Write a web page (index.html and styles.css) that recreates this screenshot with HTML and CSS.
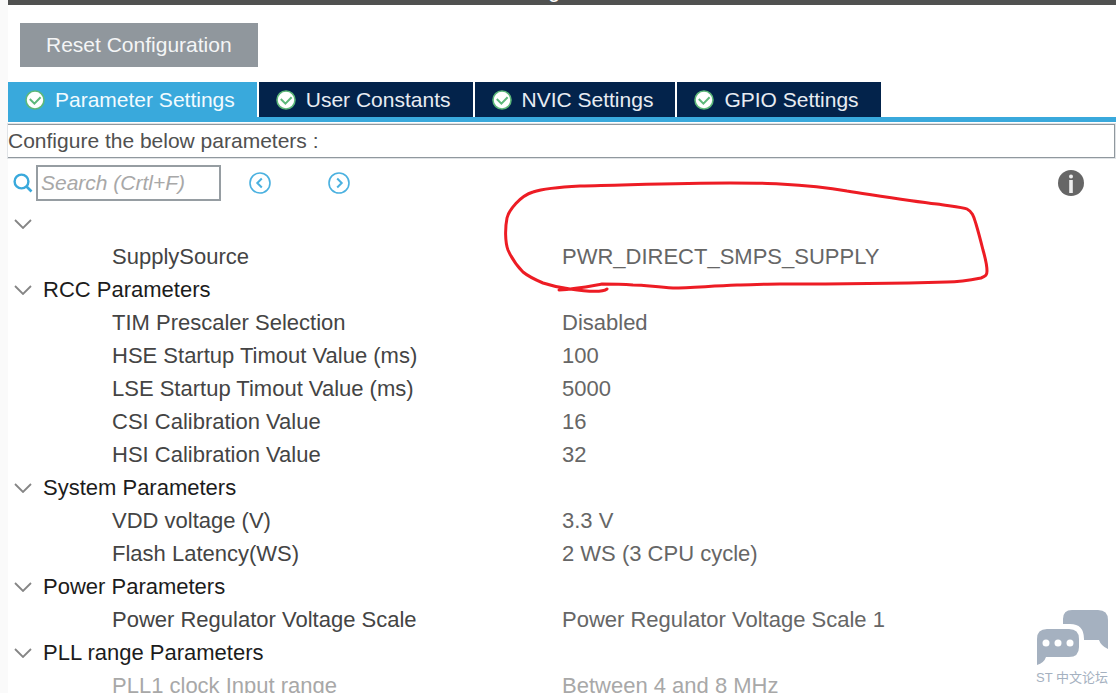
FILE: index.html
```
<!DOCTYPE html>
<html lang="en">
<head>
    <meta charset="UTF-8">
    <meta name="viewport" content="width=device-width, initial-scale=1.0">
    <title>RCC Configuration</title>
    <link rel="stylesheet" href="styles.css">
</head>
<body>
    <!-- shared icons -->
    <svg class="sprite" aria-hidden="true">
        <symbol id="check" viewBox="0 0 20 20">
            <circle cx="10" cy="10" r="9" fill="#fff" stroke="#5db87a" stroke-width="1.6"/>
            <path d="M4.8 9l4.6 4.6 6.2-6.4" fill="none" stroke="#5db87a" stroke-width="2"/>
        </symbol>
        <symbol id="chevron" viewBox="0 0 18 10">
            <path d="M1 1l8 8 8-8" fill="none" stroke="#858585" stroke-width="1.8"/>
        </symbol>
    </svg>

    <div class="panel">
        <header class="title-bar"><span>Configuration</span></header>

        <div class="actions">
            <button type="button" class="reset-button">Reset Configuration</button>
        </div>

        <nav class="tabs">
            <button type="button" class="tab active"><svg class="check"><use href="#check"/></svg>Parameter Settings</button>
            <button type="button" class="tab"><svg class="check"><use href="#check"/></svg>User Constants</button>
            <button type="button" class="tab"><svg class="check"><use href="#check"/></svg>NVIC Settings</button>
            <button type="button" class="tab"><svg class="check"><use href="#check"/></svg>GPIO Settings</button>
        </nav>

        <p class="hint">Configure the below parameters :</p>

        <div class="toolbar">
            <label for="search" aria-label="Search">
                <svg class="search-icon" viewBox="0 0 20 20">
                    <circle cx="8.5" cy="8.5" r="6.9" fill="none" stroke="#39a9dc" stroke-width="2.4"/>
                    <path d="M13.5 13.5l5 5" stroke="#39a9dc" stroke-width="2.6"/>
                </svg>
            </label>
            <input type="text" id="search" class="search" placeholder="Search (Crtl+F)">
            <button type="button" class="icon-button previous" aria-label="Previous">
                <svg viewBox="0 0 22 22" fill="none" stroke="#4bb1e0">
                    <circle cx="11" cy="11" r="10" stroke-width="1.6"/>
                    <path d="M12.8 6.5L8.3 11l4.5 4.5" stroke-width="2"/>
                </svg>
            </button>
            <button type="button" class="icon-button next" aria-label="Next">
                <svg viewBox="0 0 22 22" fill="none" stroke="#4bb1e0">
                    <circle cx="11" cy="11" r="10" stroke-width="1.6"/>
                    <path d="M9.2 6.5l4.5 4.5-4.5 4.5" stroke-width="2"/>
                </svg>
            </button>
            <button type="button" class="icon-button info" aria-label="Information">
                <svg viewBox="0 0 26 26">
                    <circle cx="13" cy="13" r="13" fill="#666"/>
                    <circle cx="13" cy="6.4" r="2" fill="#eee"/>
                    <path d="M13 10v13" stroke="#eee" stroke-width="3.6"/>
                </svg>
            </button>
        </div>

        <table class="parameters">
            <tbody>
                <tr class="group"><th colspan="2"><button type="button" class="toggle" aria-label="Supply"><svg class="chevron"><use href="#chevron"/></svg></button></th></tr>
                <tr><td>SupplySource</td><td>PWR_DIRECT_SMPS_SUPPLY</td></tr>
            </tbody>
            <tbody>
                <tr class="group"><th colspan="2"><button type="button" class="toggle"><svg class="chevron"><use href="#chevron"/></svg>RCC Parameters</button></th></tr>
                <tr><td>TIM Prescaler Selection</td><td>Disabled</td></tr>
                <tr><td>HSE Startup Timout Value (ms)</td><td>100</td></tr>
                <tr><td>LSE Startup Timout Value (ms)</td><td>5000</td></tr>
                <tr><td>CSI Calibration Value</td><td>16</td></tr>
                <tr><td>HSI Calibration Value</td><td>32</td></tr>
            </tbody>
            <tbody>
                <tr class="group"><th colspan="2"><button type="button" class="toggle"><svg class="chevron"><use href="#chevron"/></svg>System Parameters</button></th></tr>
                <tr><td>VDD voltage (V)</td><td>3.3 V</td></tr>
                <tr><td>Flash Latency(WS)</td><td>2 WS (3 CPU cycle)</td></tr>
            </tbody>
            <tbody>
                <tr class="group"><th colspan="2"><button type="button" class="toggle"><svg class="chevron"><use href="#chevron"/></svg>Power Parameters</button></th></tr>
                <tr><td>Power Regulator Voltage Scale</td><td>Power Regulator Voltage Scale 1</td></tr>
            </tbody>
            <tbody>
                <tr class="group"><th colspan="2"><button type="button" class="toggle"><svg class="chevron"><use href="#chevron"/></svg>PLL range Parameters</button></th></tr>
                <tr class="disabled"><td>PLL1 clock Input range</td><td>Between 4 and 8 MHz</td></tr>
            </tbody>
        </table>

        <!-- hand-drawn ring round the supply source value -->
        <svg class="marker" viewBox="0 0 490 116" aria-hidden="true">
            <path d="M107 109C103 112 90 112 70 109C62 108 52 106 43 103C36 100 29 97 23 92C17 86 12 79 8 70C5 62 5 48 7 38C9 30 20 16 33 12C42 9 60 7 80 6C130 5 180 3 230 3C250 3 265 3 280 4C300 5 325 7 347 11C380 16 410 21 437 24C450 26 463 27 467 29C473 32 474 38 476 44C479 54 481 62 483 70C485 77 487 85 487 91C487 95 486 96 481 98C471 100 460 102 447 102C410 103 340 104 280 104C265 104 250 105 237 105C210 106 190 108 173 108C155 107 145 105 133 105C120 104 110 104 102 104C85 107 75 109 59 110"/>
        </svg>
    </div>

    <div class="watermark">
        <svg viewBox="0 0 71 55" fill="#a5b1c0" aria-hidden="true">
            <path d="M26 14V9Q26 0 35 0H61Q71 0 71 10V39Q64 36 62 30H47V29Q47 14 33 14Z"/>
            <path d="M10 19H32Q42 19 42 29V37Q42 47 32 47H9Q7 53 0 55V29Q0 19 10 19Z"/>
            <g fill="#fff"><circle cx="9" cy="33" r="3.5"/><circle cx="21" cy="33" r="3.5"/><circle cx="33" cy="33" r="3.5"/></g>
        </svg>
        <span>ST 中文论坛</span>
    </div>
</body>
</html>
```
FILE: styles.css
```
* {
    box-sizing: border-box;
}
body {
    margin: 0;
    height: 100vh;
    overflow: hidden;
    background-color: #fafafa;
    font-family: "Liberation Sans", Arial, sans-serif;
    font-size: 21px;
    color: #505050;
}
button, input {
    font: inherit;
    border: none;
    padding: 0;
    background: none;
}
.sprite {
    display: none;
}
.panel {
    position: relative;
    min-height: 100vh;
    margin-left: 8px;
    background-color: #fff;
}
.title-bar {
    display: flex;
    justify-content: center;
    align-items: flex-end;
    height: 5px;
    padding-bottom: 5px;
    overflow: hidden;
    background-color: #505150;
    color: #fff;
    font-size: 22px;
    line-height: 20px;
}
.actions {
    padding: 18px 12px 15px;
}
.reset-button {
    height: 44px;
    padding: 0 26px;
    background-color: #90979d;
    color: #f4f5f6;
}
.tabs {
    display: flex;
    gap: 2px;
    border-bottom: 5px solid #39a9dc;
}
.tab {
    display: flex;
    align-items: center;
    height: 35px;
    padding: 0 22px 0 17px;
    gap: 10px;
    background-color: #03234b;
    color: #e8ecf2;
}
.tab.active {
    background-color: #39a9dc;
    color: #f2fbff;
}
.check {
    width: 20px;
    height: 20px;
}
.hint {
    margin: 2px 1px 7px 0;
    border: 1px solid #90989e;
    border-left: none;
    outline: 1px solid #e0e3e6;
    line-height: 32px;
}
.toolbar {
    display: flex;
    align-items: center;
    height: 36px;
    padding: 0 32px 0 5px;
}
.toolbar label {
    display: flex;
    width: 23px;
}
.toolbar svg {
    display: block;
}
.search-icon {
    width: 20px;
    height: 20px;
}
.search {
    width: 185px;
    height: 36px;
    padding: 0 3px;
    border: 2px solid #969da2;
}
.search::placeholder {
    color: #a8a8a8;
    font-style: italic;
}
.icon-button svg {
    width: 22px;
    height: 22px;
}
.previous {
    margin-left: 28px;
}
.next {
    margin-left: 57px;
}
.info {
    margin-left: auto;
}
.info svg {
    width: 26px;
    height: 26px;
}
.parameters {
    width: 100%;
    margin-top: 6px;
    border-collapse: collapse;
    table-layout: fixed;
    font-size: 22px;
}
.parameters tr {
    height: 33px;
}
.parameters th, .parameters td {
    padding: 0;
    text-align: left;
    font-weight: normal;
    line-height: 33px;
}
.parameters td:first-child {
    padding-left: 104px;
    color: #444;
}
.parameters td {
    color: #666;
}
.parameters .disabled td {
    color: #a8a8a8;
}
.toggle {
    display: flex;
    align-items: center;
    gap: 11px;
    height: 33px;
    padding-left: 6px;
    color: #1c1c1c;
}
.chevron {
    width: 18px;
    height: 10px;
}
.marker {
    position: absolute;
    top: 180px;
    left: 492px;
    width: 490px;
    height: 116px;
    overflow: visible;
    pointer-events: none;
}
.marker path {
    fill: none;
    stroke: #ed1c24;
    stroke-width: 3;
    stroke-linecap: round;
    stroke-linejoin: round;
}
.watermark {
    position: absolute;
    right: 8px;
    bottom: 6px;
    display: flex;
    flex-direction: column;
    align-items: center;
    gap: 3px;
    color: #a5b1c0;
    font-family: "Liberation Sans", "Noto Sans CJK SC", sans-serif;
    font-size: 13px;
    line-height: 19px;
}
.watermark svg {
    width: 71px;
    height: 55px;
}
```
